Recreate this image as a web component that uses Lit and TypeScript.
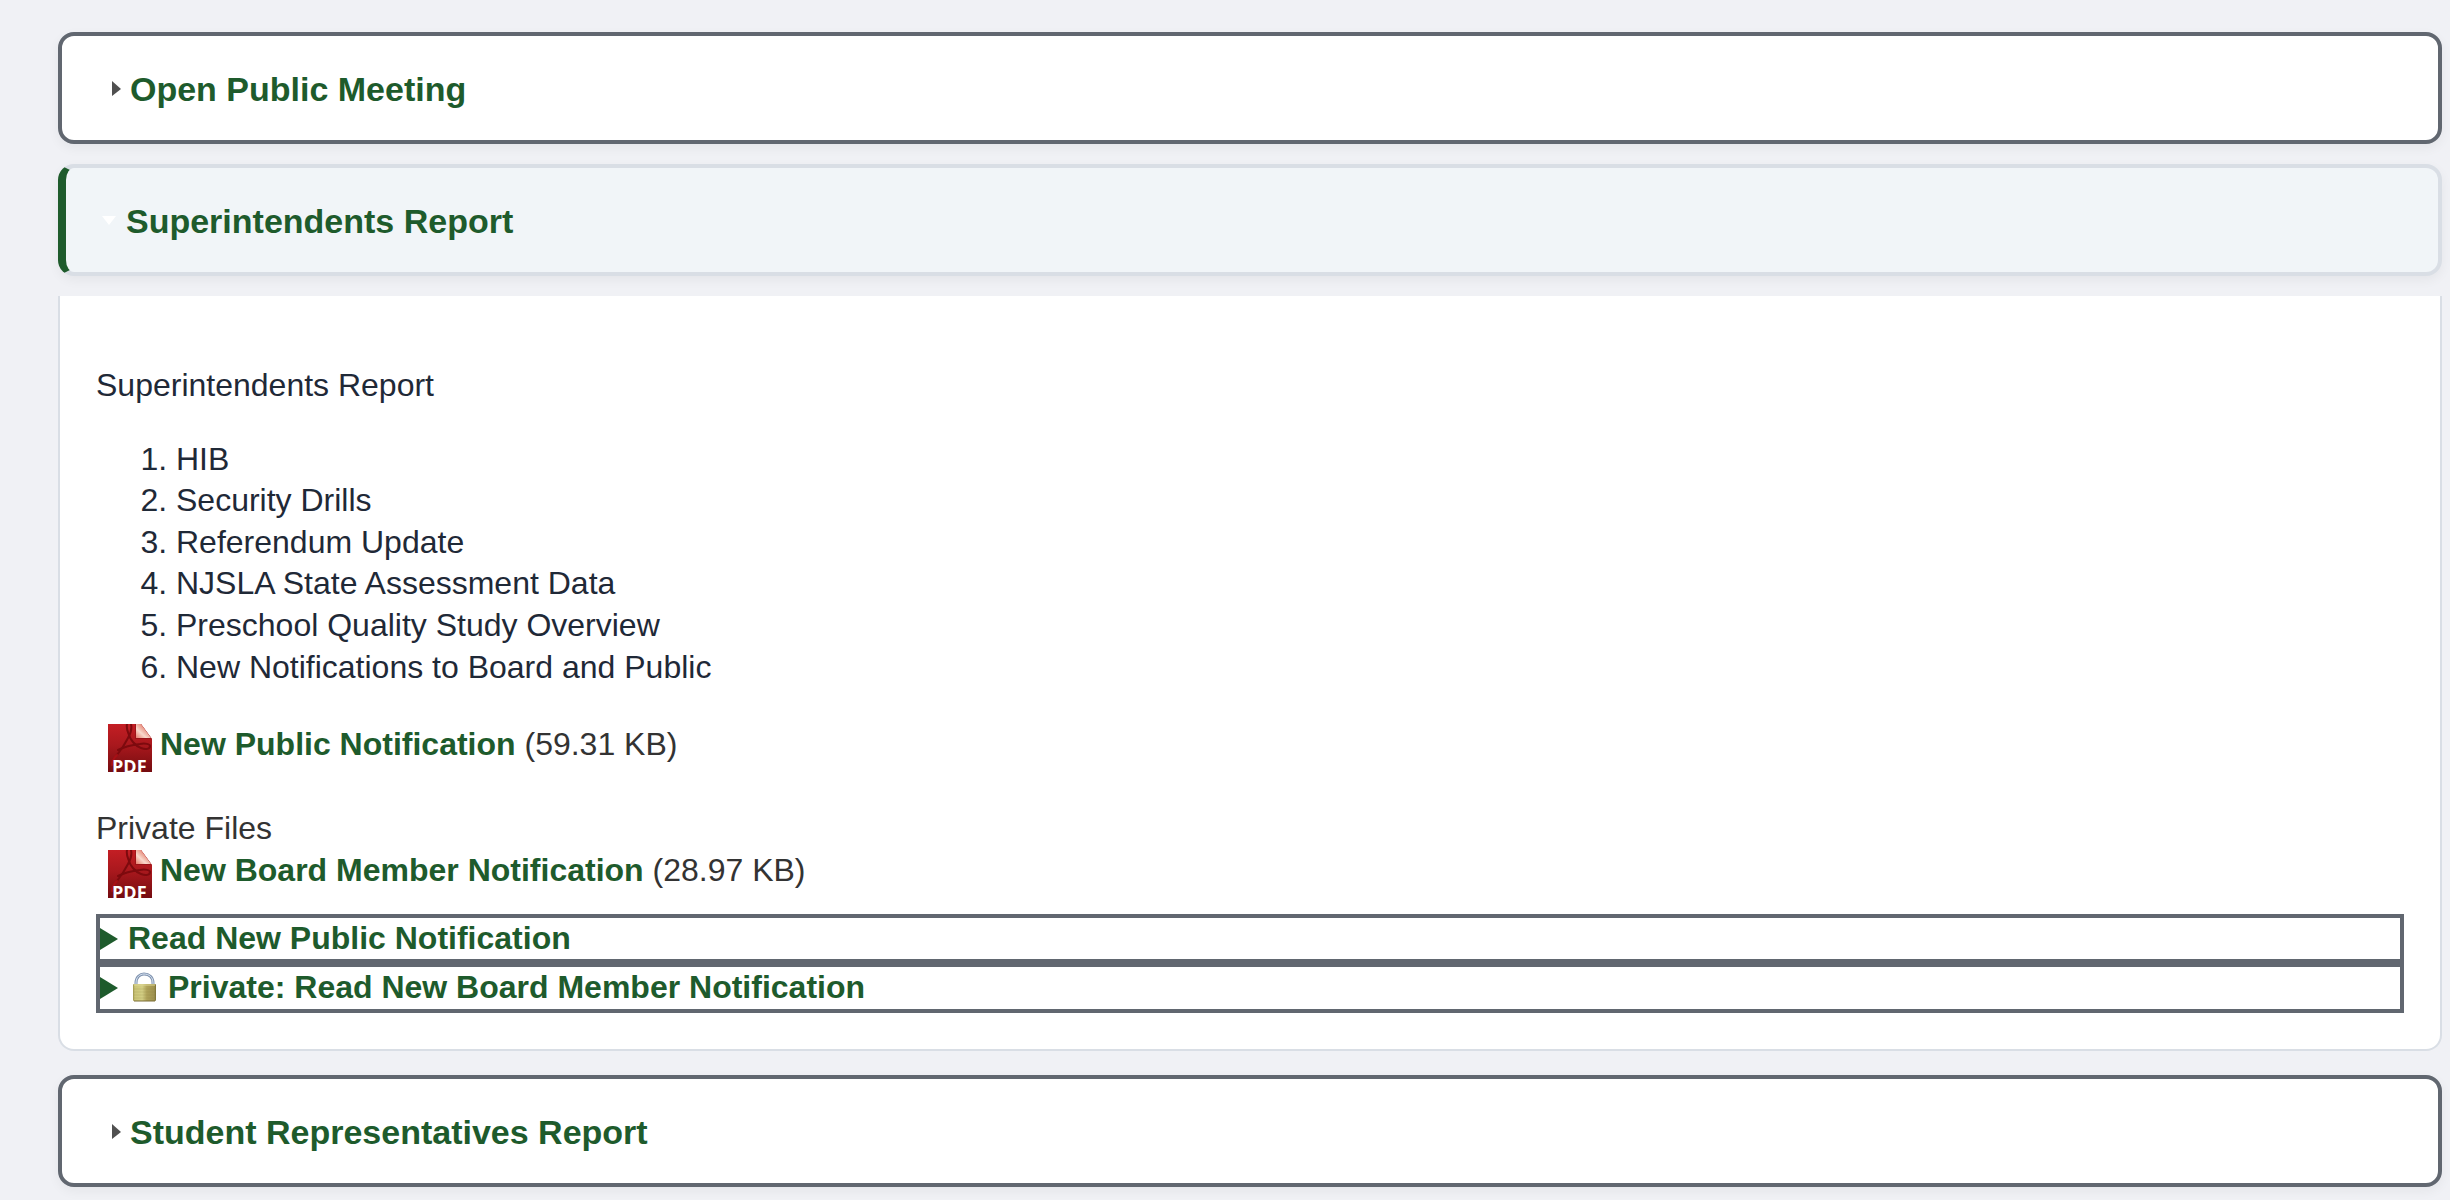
import { LitElement, html, svg, css, nothing } from "lit";
import { customElement, property, state } from "lit/decorators.js";
import { classMap } from "lit/directives/class-map.js";

interface AgendaFile {
  name: string;
  size: string;
}

const AGENDA_ITEMS = [
  "HIB",
  "Security Drills",
  "Referendum Update",
  "NJSLA State Assessment Data",
  "Preschool Quality Study Overview",
  "New Notifications to Board and Public",
];

const PUBLIC_FILES: AgendaFile[] = [{ name: "New Public Notification", size: "59.31 KB" }];
const PRIVATE_FILES: AgendaFile[] = [{ name: "New Board Member Notification", size: "28.97 KB" }];

@customElement("pdf-icon")
export class PdfIcon extends LitElement {
  static styles = css`
    :host {
      display: block;
      flex: none;
    }
    .icon {
      display: block;
      width: 44px;
      height: 48px;
    }
    .label {
      font: bold 18px "Open Sans", sans-serif;
      fill: #fff;
    }
  `;

  render() {
    return html`
      <svg class="icon" viewBox="0 0 44 48" aria-hidden="true">
        <defs>
          <linearGradient id="sheet" x1="0" y1="0" x2="0" y2="1">
            <stop offset="0" stop-color="#c41e24" />
            <stop offset="0.45" stop-color="#a8181d" />
            <stop offset="1" stop-color="#740c10" />
          </linearGradient>
          <linearGradient id="fold" x1="0" y1="1" x2="1" y2="0">
            <stop offset="0" stop-color="#e67c6c" />
            <stop offset="0.35" stop-color="#f9d9cc" />
            <stop offset="0.7" stop-color="#e58474" />
            <stop offset="1" stop-color="#b8262a" />
          </linearGradient>
        </defs>
        <path d="M0 0H33L44 15V48H0Z" fill="url(#sheet)" />
        <path d="M27 0H33L44 15H27Z" fill="#8a0f14" opacity="0.6" />
        <path d="M28 0H33L43 14H28Z" fill="url(#fold)" />
        <g fill="none" stroke="#7d0a0e" stroke-linecap="round" stroke-linejoin="round">
          <path d="M19 0C18 5 20 8 21 11C22 15 27 22 33 24C38 26 42 25 42 22C42 20 37 19 32 20C24 21 16 23 10 26" stroke-width="2" />
          <path d="M23 0C24 4 23 9 20 14C17 20 13 26 9 31" stroke-width="2" />
          <path d="M9 31C6 34 4 38 4 41" stroke="#a81016" stroke-width="2" />
        </g>
        <text class="label" x="4" y="49">PDF</text>
      </svg>
    `;
  }
}

@customElement("agenda-header")
export class AgendaHeader extends LitElement {
  static styles = css`
    :host {
      display: block;
    }
    .heading {
      margin: 0;
      font: inherit;
    }
    .bar {
      display: flex;
      align-items: center;
      box-sizing: border-box;
      width: 100%;
      padding: 33px 36px 31px;
      border: 4px solid #616770;
      border-radius: 16px;
      background: #fff;
      box-shadow: 0 4px 12px rgba(0, 0, 0, 0.05);
      color: #1e5b2c;
      font: bold 34px / 40px "Liberation Sans", Arial, sans-serif;
      text-align: left;
      cursor: pointer;
    }
    .bar.open {
      border-color: #d9dee5;
      border-left: 8px solid #1e5b2c;
      background: #f1f5f8;
    }
    .marker {
      flex: none;
      width: 32px;
      height: 16px;
    }
    .open .marker {
      width: 24px;
    }
  `;

  @property() label = "";
  @property({ type: Boolean }) open = false;

  render() {
    return html`
      <h2 class="heading">
        <button class=${classMap({ bar: true, open: this.open })} aria-expanded=${this.open ? "true" : "false"}>
          ${this.open
            ? html`<svg class="marker" viewBox="0 0 24 16" aria-hidden="true"><path d="M0 3H14L7 12Z" fill="#fff" /></svg>`
            : html`<svg class="marker" viewBox="0 0 32 16" aria-hidden="true"><path d="M14 0L23 8L14 15Z" fill="#505050" /></svg>`}
          <span>${this.label}</span>
        </button>
      </h2>
    `;
  }
}

@customElement("app-root")
export class AppRoot extends LitElement {
  static styles = css`
    :host {
      display: block;
      box-sizing: border-box;
      min-height: 100vh;
      padding: 32px 8px 12px 58px;
      background: #f0f1f5;
      color: #1f2937;
      font: 32px / 1.3 "Liberation Sans", Arial, sans-serif;
    }
    .agenda {
      display: flex;
      flex-direction: column;
      gap: 20px;
    }
    .panel {
      margin-bottom: 4px;
      padding: 37px 36px 36px;
      border: 2px solid #d9dee5;
      border-top: 0;
      border-radius: 0 0 16px 16px;
      background: #fff;
    }
    .intro {
      margin: 32px 0;
    }
    .topics {
      margin: 0 0 36px;
      padding-left: 80px;
    }
    .file {
      display: flex;
      align-items: flex-start;
      gap: 8px;
      padding-left: 12px;
      color: #333;
    }
    .link {
      color: #1e5b2c;
      font-weight: bold;
      text-decoration: none;
    }
    .private {
      margin-top: 36px;
      color: #333;
    }
    .notices {
      margin-top: 16px;
    }
    .summary {
      display: flex;
      align-items: center;
      border: 4px solid #616770;
      color: #1e5b2c;
      font-weight: bold;
      list-style: none;
      cursor: pointer;
    }
    .arrow {
      flex: none;
      width: 28px;
      height: 22px;
    }
    .lock {
      flex: none;
      width: 32px;
      height: 32px;
      margin-right: 8px;
    }
  `;

  @state() private expanded = new Set(["superintendent"]);

  private toggle(id: string) {
    const next = new Set(this.expanded);
    if (!next.delete(id)) next.add(id);
    this.expanded = next;
  }

  private header(id: string, label: string) {
    return html`<agenda-header .label=${label} .open=${this.expanded.has(id)} @click=${() => this.toggle(id)}></agenda-header>`;
  }

  private file(file: AgendaFile) {
    return html`
      <div class="file">
        <pdf-icon></pdf-icon>
        <span><a class="link" href="#">${file.name}</a> (${file.size})</span>
      </div>
    `;
  }

  private notice(label: string, locked = false) {
    return html`
      <details>
        <summary class="summary">
          <svg class="arrow" viewBox="0 0 28 22" aria-hidden="true"><path d="M0 0L18 11L0 22Z" fill="#1e5b2c" /></svg>
          ${locked ? this.lock() : nothing}
          <span>${label}</span>
        </summary>
      </details>
    `;
  }

  private lock() {
    return html`
      <svg class="lock" viewBox="0 0 32 32" aria-hidden="true">
        ${svg`
          <defs>
            <linearGradient id="brass" x1="0" y1="0" x2="1" y2="0">
              <stop offset="0" stop-color="#9a9148" />
              <stop offset="0.08" stop-color="#cbc577" />
              <stop offset="0.4" stop-color="#d3ce84" />
              <stop offset="0.6" stop-color="#b0a35a" />
              <stop offset="0.92" stop-color="#a09350" />
              <stop offset="1" stop-color="#786e34" />
            </linearGradient>
          </defs>
          <path d="M8 14V11C8 5 12 2 16 2C21 2 25 5 25 11V14" fill="none" stroke="#8194b0" stroke-width="3" />
          <path d="M8 14V11C8 5 12 2 16 2C21 2 25 5 25 11V14" fill="none" stroke="#dbe6f4" stroke-width="1" />
          <rect x="5" y="12" width="23" height="17" rx="1" fill="url(#brass)" />
          <path d="M6 13H27" stroke="#ddd795" />
          <path d="M6 17H27M6 20H27M6 23H27M6 26H27" stroke="#8b8040" opacity="0.2" />
          <path d="M6 29H27" stroke="#7a6d35" />
        `}
      </svg>
    `;
  }

  render() {
    return html`
      <main class="agenda">
        ${this.header("meeting", "Open Public Meeting")}
        ${this.header("superintendent", "Superintendents Report")}
        ${this.expanded.has("superintendent")
          ? html`
              <section class="panel">
                <p class="intro">Superintendents Report</p>
                <ol class="topics">
                  ${AGENDA_ITEMS.map((item) => html`<li>${item}</li>`)}
                </ol>
                ${PUBLIC_FILES.map((f) => this.file(f))}
                <div class="private">Private Files</div>
                ${PRIVATE_FILES.map((f) => this.file(f))}
                <div class="notices">
                  ${this.notice("Read New Public Notification")}
                  ${this.notice("Private: Read New Board Member Notification", true)}
                </div>
              </section>
            `
          : nothing}
        ${this.header("students", "Student Representatives Report")}
      </main>
    `;
  }
}
